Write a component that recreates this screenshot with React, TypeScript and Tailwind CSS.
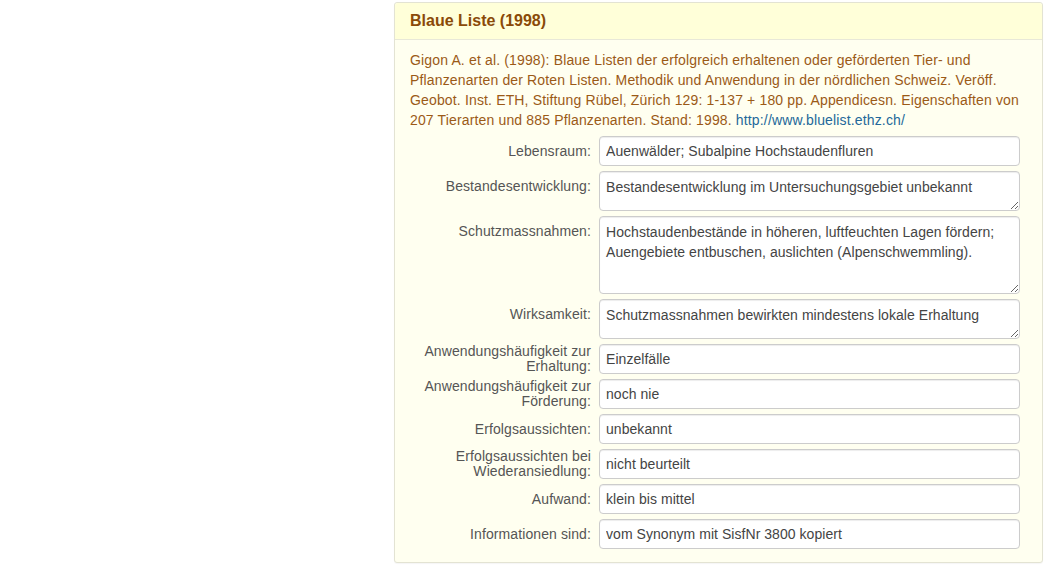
import React from "react";

type Row = { label: React.ReactNode; value: string; kind: "input" | "textarea"; h?: number; two?: boolean };

const rows: Row[] = [
  { label: "Lebensraum:", value: "Auenwälder; Subalpine Hochstaudenfluren", kind: "input" },
  { label: "Bestandesentwicklung:", value: "Bestandesentwicklung im Untersuchungsgebiet unbekannt", kind: "textarea", h: 40 },
  {
    label: "Schutzmassnahmen:",
    value: "Hochstaudenbestände in höheren, luftfeuchten Lagen fördern; Auengebiete entbuschen, auslichten (Alpenschwemmling).",
    kind: "textarea",
    h: 78,
  },
  { label: "Wirksamkeit:", value: "Schutzmassnahmen bewirkten mindestens lokale Erhaltung", kind: "textarea", h: 40 },
  { label: <>Anwendungshäufigkeit zur<br />Erhaltung:</>, value: "Einzelfälle", kind: "input", two: true },
  { label: <>Anwendungshäufigkeit zur<br />Förderung:</>, value: "noch nie", kind: "input", two: true },
  { label: "Erfolgsaussichten:", value: "unbekannt", kind: "input" },
  { label: <>Erfolgsaussichten bei<br />Wiederansiedlung:</>, value: "nicht beurteilt", kind: "input", two: true },
  { label: "Aufwand:", value: "klein bis mittel", kind: "input" },
  { label: "Informationen sind:", value: "vom Synonym mit SisfNr 3800 kopiert", kind: "input" },
];

const ff = { fontFamily: '"Liberation Sans", Arial, sans-serif' };

export default function App() {
  return (
    <div className="min-h-[565px] bg-white text-[14px]" style={ff}>
      <div className="flex pt-[2px]">
        <div className="w-[394px] shrink-0" />
        <div className="w-[649px] shrink-0 border border-[#e3e3d3] rounded-[3px] bg-[#fffff0] shadow-[0_1px_1px_rgba(0,0,0,0.04)]">
          <div className="h-[37px] bg-[#ffffd9] border-b border-[#e8e8d8] px-[15px] flex items-center rounded-t-[3px]">
            <h3 className="text-[16px] font-bold text-[#8a4a08] leading-[18px]">Blaue Liste (1998)</h3>
          </div>
          <div className="pt-[10px] pb-[13px] px-[15px]">
            <p className="leading-[20px] text-[#9b5a17] mb-[6px] tracking-[0.15px]">
              Gigon A. et al. (1998): Blaue Listen der erfolgreich erhaltenen oder geförderten Tier- und
              Pflanzenarten der Roten Listen. Methodik und Anwendung in der nördlichen Schweiz. Veröff.
              Geobot. Inst. ETH, Stiftung Rübel, Zürich 129: 1-137 + 180 pp. Appendicesn. Eigenschaften von
              207 Tierarten und 885 Pflanzenarten. Stand: 1998.{" "}
              <a className="text-[#23689a]">http://www.bluelist.ethz.ch/</a>
            </p>
            <div className="flex flex-col gap-[5px]">
              {rows.map((r, i) => (
                <div key={i} className="flex gap-[8px]">
                  <div
                    className={
                      "w-[181px] shrink-0 text-right text-[#555555] tracking-[0.1px] " +
                      (r.two
                        ? "h-[30px] flex flex-col justify-center leading-[15px]"
                        : "pt-[5px] leading-[20px]")
                    }
                  >
                    <div>{r.label}</div>
                  </div>
                  {r.kind === "input" ? (
                    <input
                      readOnly
                      value={r.value}
                      className="w-[421px] h-[30px] px-[6px] border border-[#cccccc] rounded-[4px] bg-white text-[#444444] text-[14px] tracking-[0.05px] leading-[20px] shadow-[inset_0_1px_1px_rgba(0,0,0,0.075)] outline-none"
                      style={ff}
                    />
                  ) : (
                    <textarea
                      readOnly
                      value={r.value}
                      className={
                        "w-[421px] px-[6px] pt-[5px] border border-[#cccccc] rounded-[4px] bg-white text-[#444444] text-[14px] tracking-[0.05px] leading-[20px] shadow-[inset_0_1px_1px_rgba(0,0,0,0.075)] outline-none resize-y " +
                        (r.h === 78 ? "h-[78px]" : "h-[40px]")
                      }
                      style={ff}
                    />
                  )}
                </div>
              ))}
            </div>
          </div>
        </div>
      </div>
    </div>
  );
}
